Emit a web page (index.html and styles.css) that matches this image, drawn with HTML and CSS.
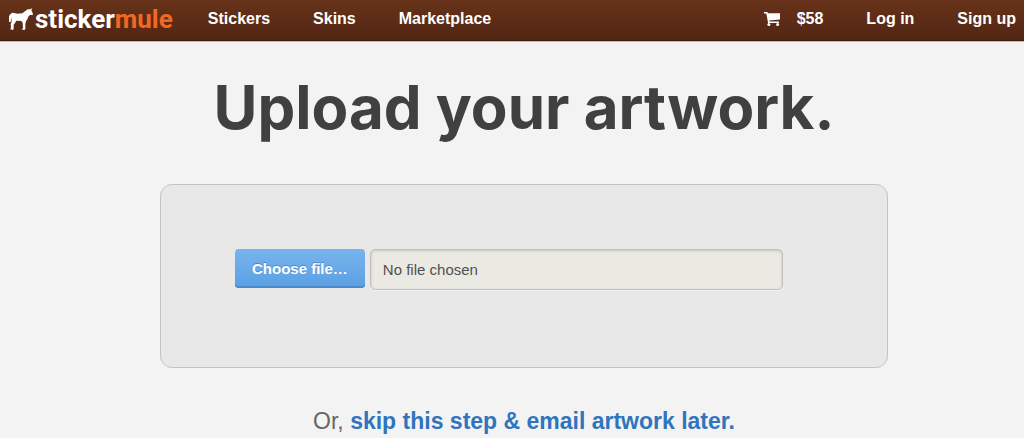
FILE: index.html
```html
<!DOCTYPE html>
<html lang="en">
<head>
<meta charset="utf-8">
<meta name="viewport" content="width=device-width, initial-scale=1">
<title>Upload your artwork</title>
<link rel="stylesheet" href="styles.css">
</head>
<body>
<header class="topbar">
  <a class="logo" href="#">
    <svg class="logo-mule" viewBox="0 0 72 66" aria-hidden="true"><path d="M70 0 L67 7 L72 17 L70 22 L65 20 L59 24 L55 34 L51 40 L49 48 L49 63 L46 66 L38 64 L42 60 L41 44 L37 39 L22 38 L18 45 L14 50 L14 62 L12 66 L4 64 L6 58 L5 49 L8 41 L7 28 L6 34 L5 43 L0 41 L0 25 L5 17 L12 14 L25 17 L40 16 L48 10 L56 4 L64 4 Z"/></svg>
    <span class="logo-text">sticker<span class="logo-accent">mule</span></span>
  </a>
  <nav class="nav nav-main" aria-label="Main">
    <a href="#">Stickers</a>
    <a href="#">Skins</a>
    <a href="#">Marketplace</a>
  </nav>
  <nav class="nav nav-account" aria-label="Account">
    <a class="cart" href="#" aria-label="Cart, $58">
      <svg class="cart-icon" viewBox="0 0 16 14" aria-hidden="true"><path d="M0 0h3.4l.4 1.3H16v6.2L5.2 8.6l.2 1H15V11H4.1L2.3 1.5H0z"/><circle cx="4.9" cy="12.5" r="1.5"/><circle cx="13.6" cy="12.5" r="1.5"/></svg>
      <span>$58</span>
    </a>
    <a href="#">Log in</a>
    <a href="#">Sign up</a>
  </nav>
</header>
<main class="content">
  <h1 class="title">Upload your artwork.</h1>
  <form class="panel">
    <button class="choose" type="button">Choose file…</button>
    <input class="filename" type="text" value="No file chosen" aria-label="Selected file" readonly>
  </form>
  <p class="skip">Or, <a href="#">skip this step &amp; email artwork later.</a></p>
</main>
</body>
</html>
```
FILE: styles.css
```css
* {
  box-sizing: border-box;
}

body {
  margin: 0;
  background: #f3f3f3;
  color: #404040;
  font-family: "Liberation Sans", Arial, sans-serif;
}

a {
  text-decoration: none;
}

.topbar {
  display: flex;
  align-items: center;
  height: 41px;
  padding: 0 8px 3px 9px;
  background: linear-gradient(#673219, #522614);
  border-bottom: 1px solid #3d1a0b;
  box-shadow: 0 1px #c4b8b0;
}

.logo {
  display: flex;
  align-items: center;
  gap: 2px;
  color: #fff;
}

.logo-mule {
  width: 24px;
  height: 22px;
  fill: #fff;
}

.logo-text {
  font: bold 26px/28px Roboto, sans-serif;
}

.logo-accent {
  color: #f26722;
}

.nav {
  display: flex;
  gap: 43px;
  font-size: 16px;
  font-weight: bold;
  line-height: 20px;
}

.nav a {
  color: #fff;
}

.nav-main {
  margin-left: 35px;
}

.nav-account {
  margin-left: auto;
}

.cart {
  display: flex;
  align-items: center;
  gap: 17px;
}

.cart-icon {
  width: 16px;
  height: 14px;
  fill: #fff;
}

.content {
  max-width: 752px;
  margin: 0 auto;
  padding-left: 24px;
}

.title {
  margin: 0;
  padding: 26px 0 37px;
  font: bold 60px/80px Inter, sans-serif;
  text-align: center;
  white-space: nowrap;
}

.panel {
  display: flex;
  align-items: flex-start;
  gap: 5px;
  padding: 64px 104px 77px 74px;
  background: #e8e8e8;
  border: 1px solid #c4c4c4;
  border-radius: 12px;
}

.choose {
  flex: none;
  height: 39px;
  padding: 0 17px;
  border: 0;
  border-radius: 4px;
  background: linear-gradient(#78b4ec, #5aa0e4);
  box-shadow: inset 0 -2px #4a8acb;
  color: #fff;
  font: bold 15px/20px "Liberation Sans", Arial, sans-serif;
  text-shadow: 0 -1px #4a88c4;
}

.filename {
  flex: 1;
  min-width: 0;
  height: 41px;
  padding: 0 12px;
  border: 1px solid #bebebe;
  border-radius: 5px;
  background: #eaeae2;
  box-shadow: inset 0 1px 3px #c4c4bc, 0 1px #f4f4f4;
  color: #505050;
  font: 15px/20px "Liberation Sans", Arial, sans-serif;
}

.skip {
  margin: 37px 0 0;
  color: #666;
  font-size: 23px;
  line-height: 32px;
  text-align: center;
}

.skip a {
  color: #2f74be;
  font-weight: bold;
}
```
